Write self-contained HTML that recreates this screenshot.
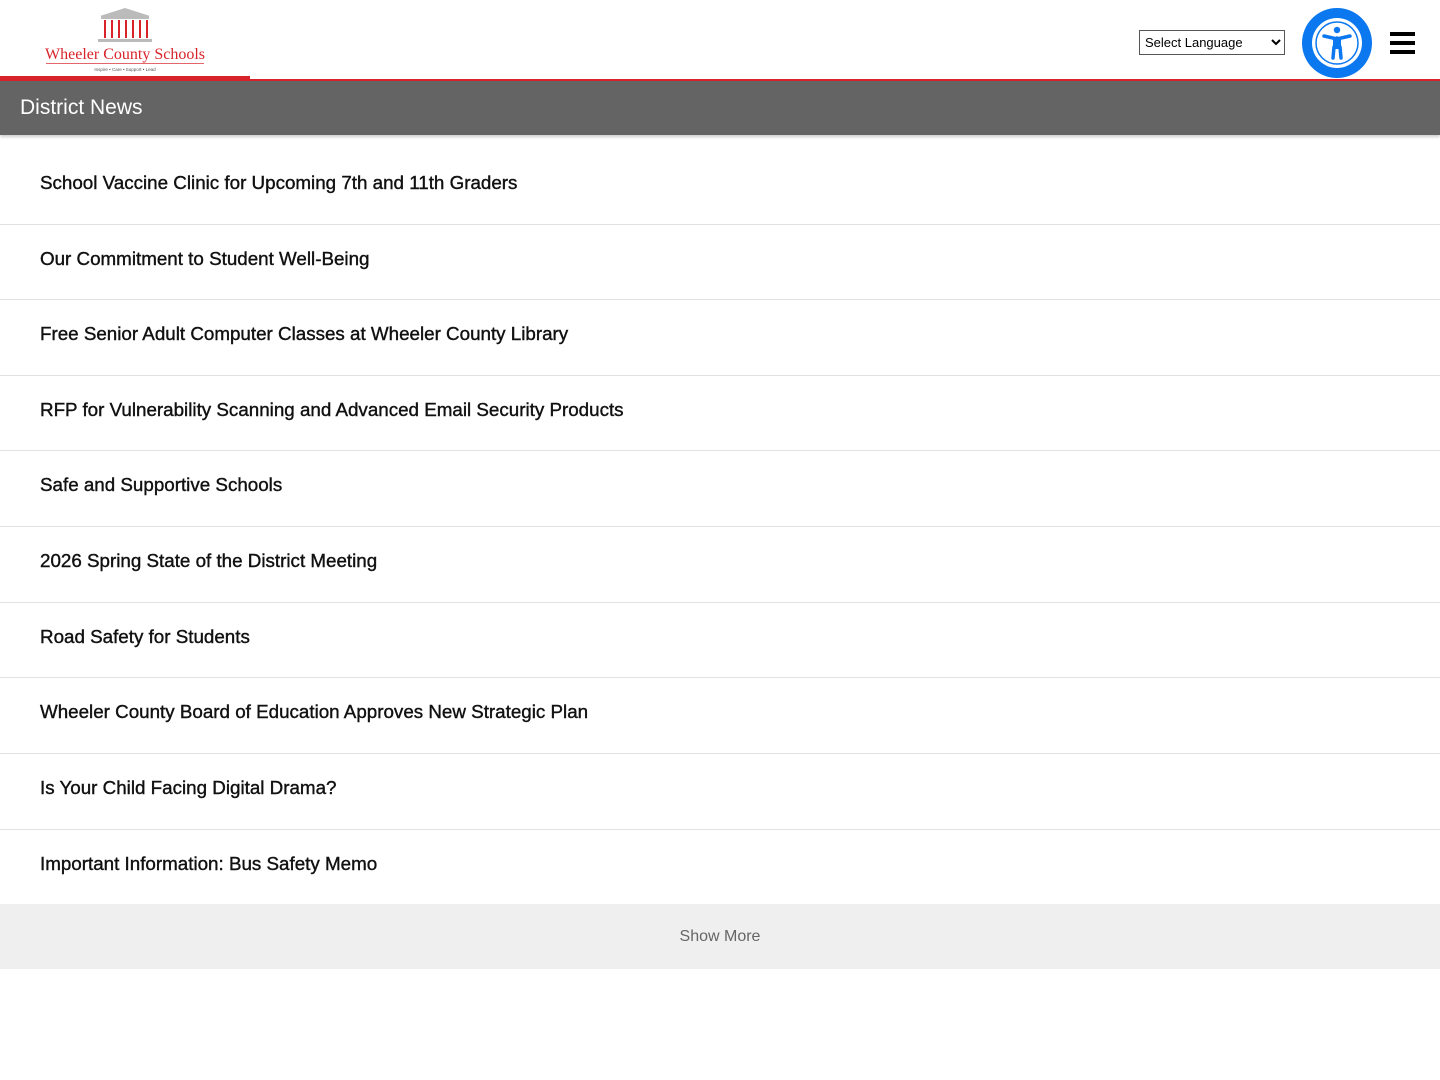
<!DOCTYPE html>
<html><head><meta charset="utf-8"><style>
*{margin:0;padding:0;box-sizing:border-box}
body{width:1440px;height:1080px;background:#fff;font-family:"Liberation Sans",sans-serif;position:relative;overflow:hidden}
.hdr{position:absolute;left:0;top:0;width:1440px;height:81px;border-bottom:2px solid #d8232a}
.redthick{position:absolute;left:0;top:76px;width:250px;height:5px;background:#d8232a}
.bar{position:absolute;left:0;top:81px;width:1440px;height:54px;background:#646464;color:#fff;font-size:21px;padding-left:20px;line-height:54px;box-shadow:0 2px 3px rgba(0,0,0,.2)}
.line{position:absolute;left:0;width:1440px;height:1px;background:#e2e2e2}
.t{position:absolute;left:40px;font-size:18.8px;line-height:24px;color:#111;-webkit-text-stroke:0.4px #111;white-space:nowrap}
.more{position:absolute;left:0;top:904px;width:1440px;height:65px;background:#efefef;color:#666;font-size:16px;text-align:center;line-height:66px}
select{position:absolute;left:1139px;top:30px;width:146px;height:25px;font-family:"Liberation Sans",sans-serif;font-size:13px;border:1px solid #555;background:#fff;padding-left:1px}
</style></head><body>
<div class="hdr"></div>
<div class="redthick"></div>
<svg style="position:absolute;left:40px;top:4px" width="170" height="70" viewBox="0 0 170 70">
<polygon points="60,12 85,4 110,12" fill="#bbb"/>
<rect x="61" y="12" width="48" height="3" fill="#bbb"/>
<g fill="#d8232a"><rect x="64" y="16" width="2" height="18"/><rect x="71" y="16" width="2" height="18"/><rect x="78" y="16" width="2" height="18"/><rect x="85" y="16" width="2" height="18"/><rect x="92" y="16" width="2" height="18"/><rect x="99" y="16" width="2" height="18"/><rect x="106" y="16" width="2" height="18"/></g>
<rect x="58" y="35" width="54" height="3" fill="#bbb"/>
<text x="85" y="55" text-anchor="middle" font-family="Liberation Serif,serif" font-size="16" fill="#d8232a">Wheeler County Schools</text>
<rect x="6" y="59" width="158" height="0.7" fill="#d8232a"/>
<text x="85" y="67" text-anchor="middle" font-size="4.5" fill="#555">Inspire • Care • Support • Lead</text>
</svg>
<select><option>Select Language</option></select>
<svg style="position:absolute;left:1302px;top:8px" width="70" height="70" viewBox="0 0 70 70">
<circle cx="35" cy="35" r="35" fill="#0b78f0"/>
<circle cx="35" cy="35" r="25" fill="#fff"/>
<circle cx="35" cy="35" r="21" fill="none" stroke="#0b78f0" stroke-width="1.5"/>
<circle cx="35" cy="22" r="3.2" fill="#0b78f0"/>
<path d="M22 28 L35 31 L48 28" stroke="#0b78f0" stroke-width="3.5" fill="none" stroke-linecap="round"/>
<path d="M35 30 V39 M32 39 L31 50 M38 39 L39 50" stroke="#0b78f0" stroke-width="3.5" fill="none" stroke-linecap="round"/>
<rect x="31" y="30" width="8" height="11" fill="#0b78f0"/>
</svg>
<div style="position:absolute;left:1390px;top:32px;width:25px;height:4px;background:#000"></div>
<div style="position:absolute;left:1390px;top:41px;width:25px;height:4px;background:#000"></div>
<div style="position:absolute;left:1390px;top:50px;width:25px;height:4px;background:#000"></div>
<div class="bar">District News</div>
<div class="t" style="top:171px">School Vaccine Clinic for Upcoming 7th and 11th Graders</div>
<div class="line" style="top:224px"></div>
<div class="t" style="top:247px">Our Commitment to Student Well-Being</div>
<div class="line" style="top:299px"></div>
<div class="t" style="top:322px">Free Senior Adult Computer Classes at Wheeler County Library</div>
<div class="line" style="top:375px"></div>
<div class="t" style="top:398px">RFP for Vulnerability Scanning and Advanced Email Security Products</div>
<div class="line" style="top:450px"></div>
<div class="t" style="top:473px">Safe and Supportive Schools</div>
<div class="line" style="top:526px"></div>
<div class="t" style="top:549px">2026 Spring State of the District Meeting</div>
<div class="line" style="top:602px"></div>
<div class="t" style="top:625px">Road Safety for Students</div>
<div class="line" style="top:677px"></div>
<div class="t" style="top:700px">Wheeler County Board of Education Approves New Strategic Plan</div>
<div class="line" style="top:753px"></div>
<div class="t" style="top:776px">Is Your Child Facing Digital Drama?</div>
<div class="line" style="top:829px"></div>
<div class="t" style="top:852px">Important Information: Bus Safety Memo</div>
<div class="more">Show More</div>
</body></html>
